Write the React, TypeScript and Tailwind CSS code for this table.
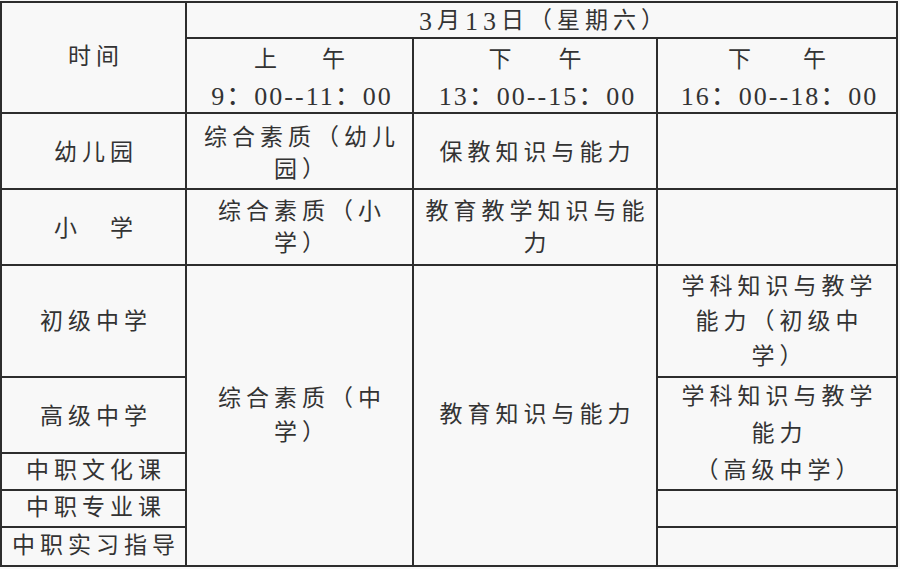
const font = "font-['Liberation_Serif','Noto_Sans_CJK_SC',serif]"

function Cell({ className = '', children }: { className?: string; children?: React.ReactNode }) {
  return (
    <div
      className={`flex items-center justify-center text-center bg-[#f8f8f8] text-[#333333] text-[23px] tracking-[5px] pl-[5px] ${className}`}
    >
      {children}
    </div>
  )
}

function Num({ children }: { children: React.ReactNode }) {
  return <span className="text-[26px] tracking-[2px]">{children}</span>
}

function Half({ name, time, gap }: { name: [string, string]; time: string; gap: string }) {
  return (
    <div className="flex flex-col items-center leading-[37px] pt-[5px]">
      <div className="flex">
        <span>{name[0]}</span>
        <span className={`inline-block ${gap}`} />
        <span>{name[1]}</span>
      </div>
      <Num>{time}</Num>
    </div>
  )
}

export default function App() {
  return (
    <div className={`w-[900px] h-[569px] bg-[#f8f8f8] pt-[1px] overflow-hidden ${font}`}>
      <div className="grid w-[898px] bg-[#2d2d2d] gap-[2px] p-[2px] grid-cols-[183px_225px_242px_238px] grid-rows-[34px_73px_74px_74px_110px_74px_35px_35px_37px]">
        <Cell className="col-start-1 row-start-1 row-span-2">时间</Cell>
        <Cell className="col-start-2 col-span-3 row-start-1 tracking-[3px] pt-[2px]">
          <span className="text-[26px]">3</span>月<span className="text-[26px]">13</span>日（星期六）
        </Cell>
        <Cell className="col-start-2 row-start-2">
          <Half name={['上', '午']} time="9：00--11：00" gap="w-[40px]" />
        </Cell>
        <Cell className="col-start-3 row-start-2">
          <Half name={['下', '午']} time="13：00--15：00" gap="w-[42px]" />
        </Cell>
        <Cell className="col-start-4 row-start-2">
          <Half name={['下', '午']} time="16：00--18：00" gap="w-[47px]" />
        </Cell>

        <Cell className="col-start-1 row-start-3 pt-[4px]">幼儿园</Cell>
        <Cell className="col-start-2 row-start-3 leading-[32px] pt-[6px]">
          <div>
            综合素质（幼儿
            <br />
            园）
          </div>
        </Cell>
        <Cell className="col-start-3 row-start-3 pt-[4px]">保教知识与能力</Cell>
        <Cell className="col-start-4 row-start-3" />

        <Cell className="col-start-1 row-start-4 pt-[4px]">小　学</Cell>
        <Cell className="col-start-2 row-start-4 leading-[32px] pt-[2px]">
          <div>
            综合素质（小
            <br />
            学）
          </div>
        </Cell>
        <Cell className="col-start-3 row-start-4 leading-[32px] pt-[2px]">
          <div>
            教育教学知识与能
            <br />
            力
          </div>
        </Cell>
        <Cell className="col-start-4 row-start-4" />

        <Cell className="col-start-1 row-start-5 pt-[2px]">初级中学</Cell>
        <Cell className="col-start-2 row-start-5 row-span-5 leading-[34px]">
          <div>
            综合素质（中
            <br />
            学）
          </div>
        </Cell>
        <Cell className="col-start-3 row-start-5 row-span-5">教育知识与能力</Cell>
        <Cell className="col-start-4 row-start-5 leading-[35px]">
          <div>
            学科知识与教学
            <br />
            能力（初级中
            <br />
            学）
          </div>
        </Cell>

        <Cell className="col-start-1 row-start-6 pt-[4px]">高级中学</Cell>
        <Cell className="col-start-4 row-start-6 row-span-2 leading-[37px]">
          <div>
            学科知识与教学
            <br />
            能力
            <br />
            （高级中学）
          </div>
        </Cell>
        <Cell className="col-start-1 row-start-7">中职文化课</Cell>
        <Cell className="col-start-1 row-start-8">中职专业课</Cell>
        <Cell className="col-start-4 row-start-8" />
        <Cell className="col-start-1 row-start-9">中职实习指导</Cell>
        <Cell className="col-start-4 row-start-9" />
      </div>
    </div>
  )
}
